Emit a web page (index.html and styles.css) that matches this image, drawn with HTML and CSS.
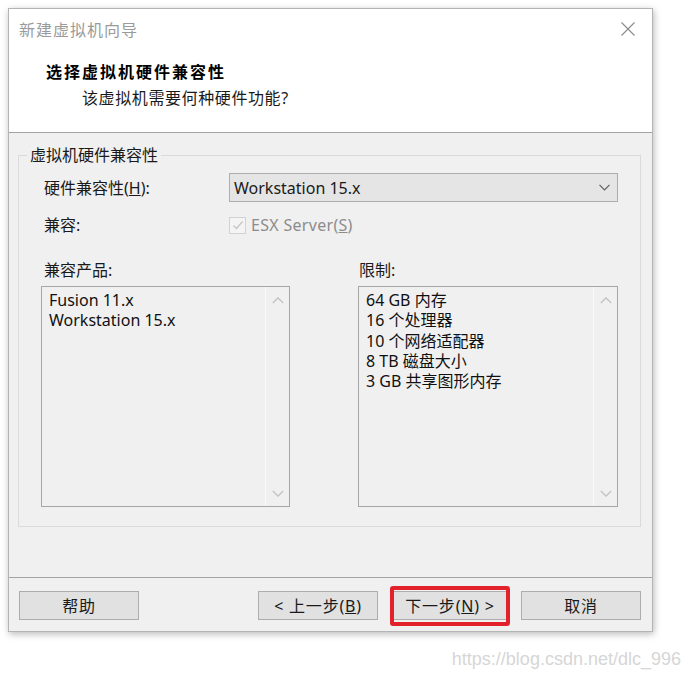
FILE: index.html
```html
<!DOCTYPE html>
<html lang="zh-CN">
<head>
<meta charset="utf-8">
<title>新建虚拟机向导</title>
<link rel="stylesheet" href="styles.css">
</head>
<body>
<div class="dialog">
  <div class="header">
    <div class="titlebar">
      <span class="title">新建虚拟机向导</span>
      <svg class="close" width="14" height="14" viewBox="0 0 14 14"><path d="M0.5 0.5 L13.5 13.5 M13.5 0.5 L0.5 13.5" stroke="#8a8a8a" stroke-width="1.1" fill="none"/></svg>
    </div>
    <div class="heading">选择虚拟机硬件兼容性</div>
    <div class="subheading">该虚拟机需要何种硬件功能?</div>
  </div>
  <div class="body">
    <fieldset class="group">
      <legend>虚拟机硬件兼容性</legend>
      <div class="row row-select">
        <span class="label">硬件兼容性(<u>H</u>):</span>
        <div class="select">
          <span>Workstation 15.x</span>
          <svg class="chev" width="11" height="7" viewBox="0 0 11 7"><path d="M0.5 0.8 L5.5 5.8 L10.5 0.8" stroke="#606060" stroke-width="1.2" fill="none"/></svg>
        </div>
      </div>
      <div class="row row-check">
        <span class="label">兼容:</span>
        <span class="check">
          <span class="box"><svg width="14" height="14" viewBox="0 0 14 14"><path d="M2.5 7.5 L5.5 10.5 L11.5 3.5" stroke="#c4c4c4" stroke-width="1.2" fill="none"/></svg></span>
          <span class="check-text">ESX Server(<u>S</u>)</span>
        </span>
      </div>
      <div class="lists">
        <div class="list-col">
          <div class="list-label left">兼容产品:</div>
          <div class="listbox">
            <div class="items">
              <div>Fusion 11.x</div>
              <div>Workstation 15.x</div>
            </div>
            <div class="scroll">
              <svg width="12" height="7" viewBox="0 0 12 7"><path d="M0.8 6 L6 1 L11.2 6" stroke="#c2c2c2" stroke-width="1.3" fill="none"/></svg>
              <svg width="12" height="7" viewBox="0 0 12 7"><path d="M0.8 1 L6 6 L11.2 1" stroke="#c2c2c2" stroke-width="1.3" fill="none"/></svg>
            </div>
          </div>
        </div>
        <div class="list-col">
          <div class="list-label right">限制:</div>
          <div class="listbox">
            <div class="items">
              <div>64 GB 内存</div>
              <div>16 个处理器</div>
              <div>10 个网络适配器</div>
              <div>8 TB 磁盘大小</div>
              <div>3 GB 共享图形内存</div>
            </div>
            <div class="scroll">
              <svg width="12" height="7" viewBox="0 0 12 7"><path d="M0.8 6 L6 1 L11.2 6" stroke="#c2c2c2" stroke-width="1.3" fill="none"/></svg>
              <svg width="12" height="7" viewBox="0 0 12 7"><path d="M0.8 1 L6 6 L11.2 1" stroke="#c2c2c2" stroke-width="1.3" fill="none"/></svg>
            </div>
          </div>
        </div>
      </div>
    </fieldset>
  </div>
  <div class="footer">
    <button class="btn">帮助</button>
    <div class="nav">
      <button class="btn">&lt; 上一步(<u>B</u>)</button>
      <button class="btn next">下一步(<u>N</u>) &gt;<span class="highlight"></span></button>
      <button class="btn cancel">取消</button>
    </div>
  </div>
</div>
<div class="watermark">https://blog.csdn.net/dlc_996</div>
</body>
</html>
```

FILE: styles.css
```css
html, body {
  margin: 0;
  padding: 0;
  background: #ffffff;
}

body {
  font-family: "Noto Sans", "Noto Sans CJK SC", sans-serif;
  font-size: 16px;
  color: #1a1a1a;
  width: 692px;
  height: 680px;
  overflow: hidden;
}

.dialog {
  box-sizing: border-box;
  width: 645px;
  height: 624px;
  margin: 8px 0 0 8px;
  border: 1px solid #b4b4b4;
  box-shadow: 1px 2px 7px rgba(0, 0, 0, 0.28);
  display: flex;
  flex-direction: column;
  background: #f0f0f0;
}

.header {
  background: #ffffff;
  height: 124px;
  box-sizing: border-box;
  border-bottom: 1px solid #a3a3a3;
  flex: none;
}

.titlebar {
  display: flex;
  justify-content: space-between;
  align-items: center;
  margin-top: 11px;
  height: 20px;
  padding: 0 17px 0 10px;
}

.title {
  color: #9a9a9a;
  font-size: 16px;
  letter-spacing: 1px;
  line-height: 20px;
}

.close {
  display: block;
  margin-top: -2px;
}

.heading {
  margin-top: 22px;
  padding-left: 37px;
  font-weight: bold;
  font-size: 16px;
  letter-spacing: 2px;
  line-height: 20px;
  color: #000;
}

.subheading {
  margin-top: 6px;
  padding-left: 73px;
  font-size: 16px;
  letter-spacing: 0.6px;
  line-height: 20px;
  color: #1a1a1a;
}

.body {
  flex: 1;
  padding: 12px 11px 0 9px;
}

.group {
  margin: 0;
  padding: 8px 0 19px 0;
  border: 1px solid #dadada;
  min-width: 0;
}

.group legend {
  margin-left: 8px;
  padding: 0 3px;
  line-height: 20px;
  height: 20px;
  font-size: 16px;
}

.row {
  display: flex;
  align-items: center;
  padding-left: 25px;
}

.row .label {
  width: 185px;
  flex: none;
  line-height: 20px;
}

.row-select {
  height: 29px;
}

.select {
  box-sizing: border-box;
  width: 389px;
  height: 29px;
  border: 1px solid #adadad;
  background: #e5e5e5;
  display: flex;
  align-items: center;
  justify-content: space-between;
  padding: 0 7px 0 4px;
  line-height: 20px;
}

.chev {
  display: block;
}

.row-check {
  margin-top: 11px;
  height: 24px;
}

.check {
  display: flex;
  align-items: center;
}

.box {
  box-sizing: border-box;
  width: 17px;
  height: 17px;
  border: 1px solid #d2d2d2;
  background: #f4f4f4;
  display: flex;
  align-items: center;
  justify-content: center;
  margin-right: 5px;
}

.box svg {
  display: block;
}

.check-text {
  color: #8c8c8c;
  line-height: 20px;
  letter-spacing: 0.3px;
}

.lists {
  display: grid;
  grid-template-columns: 249px 260px;
  column-gap: 68px;
  padding: 0 22px;
  margin-top: 23px;
}

.list-label {
  line-height: 20px;
  height: 20px;
  margin-bottom: 6px;
}

.list-label.left {
  padding-left: 3px;
}

.list-label.right {
  padding-left: 1px;
}

.listbox {
  box-sizing: border-box;
  height: 221px;
  border: 1px solid #a6a6a6;
  display: flex;
  background: #f0f0f0;
}

.items {
  flex: 1;
  padding: 3px 0 0 7px;
  line-height: 20.3px;
  color: #111;
}

.scroll {
  width: 23px;
  flex: none;
  border-left: 1px solid #fafafa;
  display: flex;
  flex-direction: column;
  justify-content: space-between;
  align-items: center;
  padding: 10px 0 9px;
}

.scroll svg {
  display: block;
}

.footer {
  flex: none;
  box-sizing: border-box;
  height: 54px;
  border-top: 1px solid #a3a3a3;
  display: flex;
  justify-content: space-between;
  align-items: flex-start;
  padding: 13px 11px 0 10px;
}

.nav {
  display: flex;
}

.btn {
  box-sizing: border-box;
  width: 120px;
  height: 29px;
  border: 1px solid #adadad;
  background: #e1e1e1;
  font-family: "Noto Sans", "Noto Sans CJK SC", sans-serif;
  font-size: 16px;
  letter-spacing: 0.8px;
  color: #1a1a1a;
  padding: 0;
  line-height: 20px;
  margin: 0;
}

.next {
  position: relative;
  margin-left: 12px;
}

.cancel {
  margin-left: 11px;
}

.highlight {
  position: absolute;
  left: -1px;
  top: -6px;
  width: 120px;
  height: 40px;
  box-sizing: border-box;
  border: 4px solid #e3212b;
  border-radius: 3px;
}

.watermark {
  text-align: right;
  padding-right: 11px;
  margin-top: 17px;
  font-family: "Liberation Sans", Arial, sans-serif;
  font-size: 18px;
  line-height: 20px;
  color: #d6d6d6;
}
```
